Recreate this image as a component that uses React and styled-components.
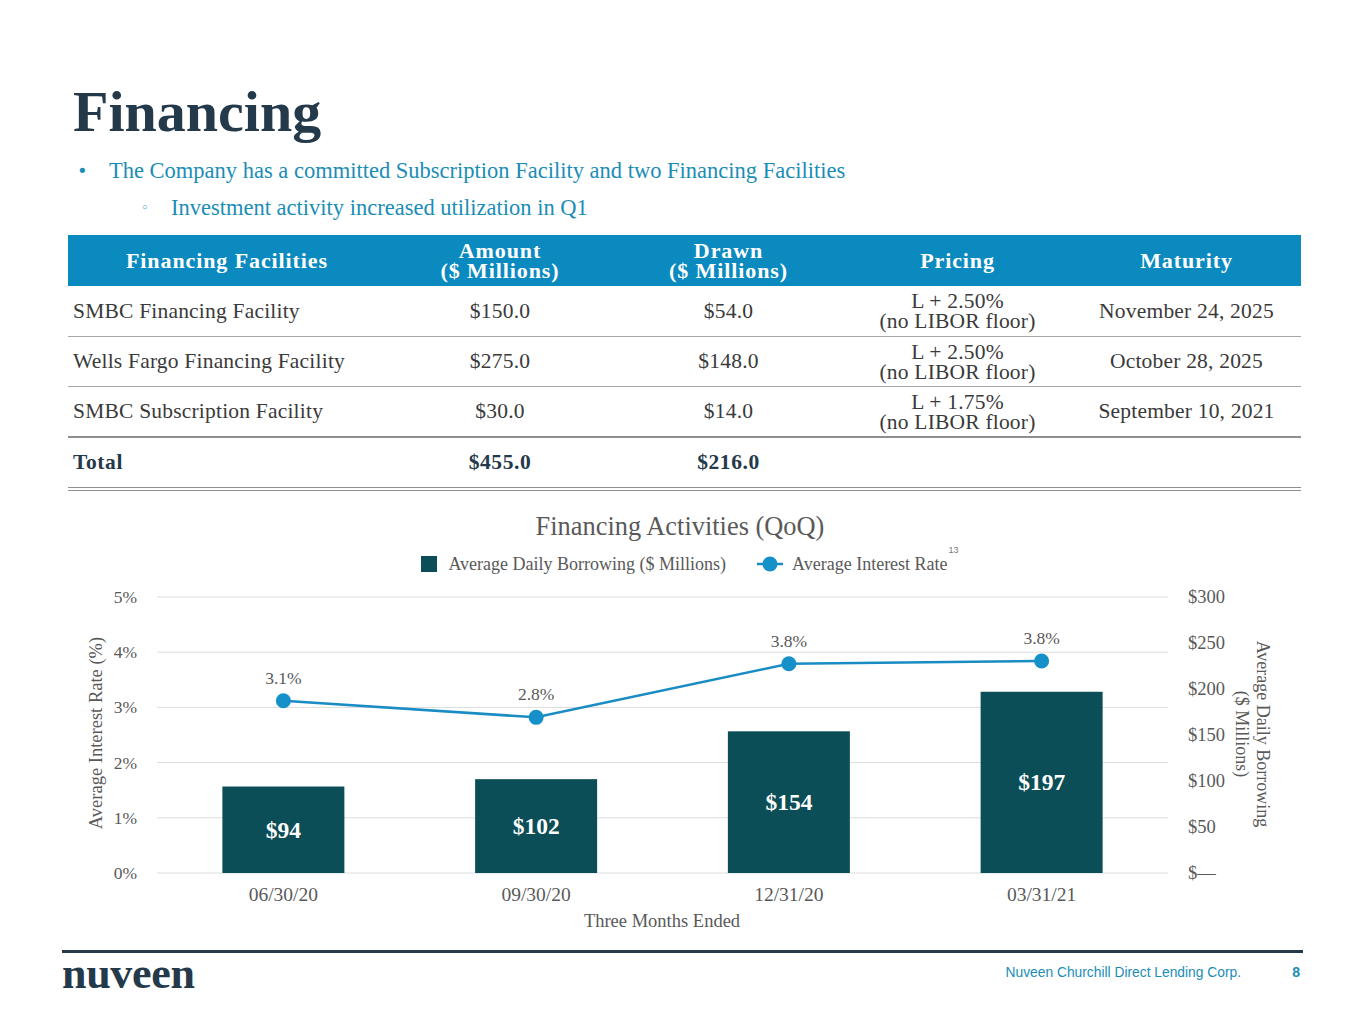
import React from "react";
import styled, { createGlobalStyle } from "styled-components";

const GlobalStyle = createGlobalStyle`
  html, body { margin: 0; padding: 0; background: #ffffff; }
  body { font-family: "Liberation Serif", "Times New Roman", serif; }
`;

const SERIF = `"Liberation Serif", "Times New Roman", serif`;
const NAVY = "#24394a";
const TEAL = "#1a8db6";
const HEAD_BLUE = "#0b8ac0";
const BAR = "#0b4e57";
const LINE = "#1a8cc4";
const GRAY_TEXT = "#595959";
const BODY_TEXT = "#3a3a3a";

const Page = styled.div`
  width: 1365px;
  height: 1024px;
  display: flex;
  flex-direction: column;
  overflow: hidden;
`;

const Title = styled.h1`
  margin: 82px 0 0 73px;
  height: 59px;
  font-family: ${SERIF};
  font-weight: 700;
  font-size: 58px;
  line-height: 60px;
  color: ${NAVY};
`;

const BulletList = styled.ul`
  list-style: none;
  margin: 18px 0 0 0;
  padding: 0;
  display: flex;
  flex-direction: column;
  gap: 13px;
`;

const BulletItem = styled.li`
  display: flex;
  align-items: center;
  height: 24px;
  padding-left: ${(p) => (p.$level === 2 ? 141 : 77)}px;
  font-family: ${SERIF};
  font-size: 22.5px;
  line-height: 24px;
  color: ${TEAL};
`;

const BulletMark = styled.span`
  display: inline-block;
  width: ${(p) => (p.$level === 2 ? 30 : 32)}px;
  font-size: ${(p) => (p.$level === 2 ? 13 : 18)}px;
  font-family: "DejaVu Sans", sans-serif;
`;

const Table = styled.div`
  margin: 15px 0 0 68px;
  width: 1233px;
  display: flex;
  flex-direction: column;
`;

const Row = styled.div`
  display: grid;
  grid-template-columns: 318px 228px 229px 229px 229px;
  box-sizing: border-box;
  height: ${(p) => p.$h}px;
  background: ${(p) => (p.$head ? HEAD_BLUE : "transparent")};
  border-bottom: ${(p) =>
    p.$head ? "none" : p.$total ? "4px double #8f8f8f" : p.$strong ? "2px solid #8f8f8f" : "1px solid #a8a8a8"};
`;

const HeadCell = styled.div`
  display: flex;
  flex-direction: column;
  align-items: center;
  justify-content: center;
  font-family: ${SERIF};
  font-weight: 700;
  font-size: 22px;
  letter-spacing: 0.9px;
  line-height: 21px;
  color: #ffffff;
  text-align: center;
`;

const Line = styled.span`
  display: block;
  height: 20px;
  line-height: 20px;
`;

const Cell = styled.div`
  display: flex;
  flex-direction: column;
  justify-content: center;
  align-items: ${(p) => (p.$left ? "flex-start" : "center")};
  padding-left: ${(p) => (p.$left ? 5 : 0)}px;
  font-family: ${SERIF};
  font-weight: ${(p) => (p.$bold ? 700 : 400)};
  font-size: 21.5px;
  letter-spacing: ${(p) => (p.$bold ? 0.6 : 0.2)}px;
  line-height: 21px;
  color: ${(p) => (p.$bold ? NAVY : BODY_TEXT)};
  text-align: center;
  white-space: nowrap;
`;

const ChartTitle = styled.div`
  margin-top: 18px;
  height: 34px;
  line-height: 34px;
  text-align: center;
  font-family: ${SERIF};
  font-size: 26.4px;
  color: ${GRAY_TEXT};
  padding-right: 5px;
`;

const Legend = styled.div`
  margin-top: 9px;
  height: 24px;
  display: flex;
  justify-content: center;
  align-items: center;
  gap: 31px;
  padding-left: 4px;
  font-family: ${SERIF};
  font-size: 18px;
  color: ${GRAY_TEXT};
`;

const LegendItem = styled.div`
  display: flex;
  align-items: center;
  gap: ${(p) => p.$gap}px;
  position: relative;
`;

const Swatch = styled.span`
  width: 16px;
  height: 16px;
  background: ${BAR};
  display: inline-block;
`;

const LegendSup = styled.sup`
  position: absolute;
  right: -11px;
  top: -9px;
  font-size: 9px;
  font-family: "Liberation Sans", Arial, sans-serif;
  color: #777;
`;

const ChartSvg = styled.svg`
  display: block;
  width: 1365px;
  height: 364px;
`;

const FooterRule = styled.div`
  margin: 10px 0 0 62px;
  width: 1241px;
  height: 3px;
  background: ${NAVY};
`;

const FooterRow = styled.div`
  height: 42px;
  display: flex;
  align-items: center;
  padding: 0 0 0 62px;
  width: 1241px;
`;

const Logo = styled.div`
  font-family: ${SERIF};
  font-weight: 700;
  font-size: 44px;
  line-height: 42px;
  color: ${NAVY};
  letter-spacing: -0.3px;
`;

const FooterText = styled.div`
  margin-left: auto;
  margin-top: -4px;
  font-family: "Liberation Sans", Arial, sans-serif;
  font-size: 13.8px;
  color: ${TEAL};
`;

const PageNum = styled.div`
  width: 62px;
  margin-top: -4px;
  text-align: right;
  padding-right: 3px;
  box-sizing: border-box;
  font-family: "Liberation Sans", Arial, sans-serif;
  font-weight: 700;
  font-size: 14px;
  color: ${TEAL};
`;

const rows = [
  ["SMBC Financing Facility", "$150.0", "$54.0", ["L + 2.50%", "(no LIBOR floor)"], "November 24, 2025"],
  ["Wells Fargo Financing Facility", "$275.0", "$148.0", ["L + 2.50%", "(no LIBOR floor)"], "October 28, 2025"],
  ["SMBC Subscription Facility", "$30.0", "$14.0", ["L + 1.75%", "(no LIBOR floor)"], "September 10, 2021"],
];
const rowHeights = [51, 50, 51];

const X0 = 157;
const X1 = 1168;
const Y0 = 873;
const PCT = 55.2;
const DOLLAR = 0.92;
const catW = (X1 - X0) / 4;
const data = [
  { label: "06/30/20", bar: 94, rate: 3.12, rateLabel: "3.1%" },
  { label: "09/30/20", bar: 102, rate: 2.82, rateLabel: "2.8%" },
  { label: "12/31/20", bar: 154, rate: 3.79, rateLabel: "3.8%" },
  { label: "03/31/21", bar: 197, rate: 3.84, rateLabel: "3.8%" },
];

function Chart() {
  const ticks = [0, 1, 2, 3, 4, 5];
  const rightTicks = ["$—", "$50", "$100", "$150", "$200", "$250", "$300"];
  const pts = data.map((d, i) => ({
    x: X0 + (i + 0.5) * catW,
    y: Y0 - d.rate * PCT,
  }));
  return (
    <ChartSvg viewBox="0 576 1365 364" fontFamily={SERIF}>
      {ticks.map((t) => (
        <line key={t} x1={X0} x2={X1} y1={Y0 - t * PCT} y2={Y0 - t * PCT} stroke="#dcdcdc" strokeWidth="1" />
      ))}
      {ticks.map((t) => (
        <text key={"l" + t} x={137} y={Y0 - t * PCT} textAnchor="end" dominantBaseline="central" fontSize="17.5" fill={GRAY_TEXT}>
          {t}%
        </text>
      ))}
      {rightTicks.map((t, i) => (
        <text key={"r" + i} x={1188} y={Y0 - i * 50 * DOLLAR} dominantBaseline="central" fontSize="18.5" fill={GRAY_TEXT}>
          {t}
        </text>
      ))}
      <text
        transform="translate(96 733) rotate(-90)"
        textAnchor="middle"
        dominantBaseline="central"
        fontSize="18.5"
        fill={GRAY_TEXT}
      >
        Average Interest Rate (%)
      </text>
      <text transform="translate(1263 734) rotate(90)" textAnchor="middle" dominantBaseline="central" fontSize="18" fill={GRAY_TEXT}>
        Average Daily Borrowing
      </text>
      <text transform="translate(1242 734) rotate(90)" textAnchor="middle" dominantBaseline="central" fontSize="18" fill={GRAY_TEXT}>
        ($ Millions)
      </text>
      {data.map((d, i) => {
        const cx = X0 + (i + 0.5) * catW;
        const h = d.bar * DOLLAR;
        return (
          <g key={d.label}>
            <rect x={cx - 61} y={Y0 - h} width={122} height={h} fill={BAR} />
            <text x={cx} y={Y0 - h / 2} textAnchor="middle" dominantBaseline="central" fontSize="23.5" fontWeight="700" fill="#ffffff">
              ${d.bar}
            </text>
            <text x={cx} y={894} textAnchor="middle" dominantBaseline="central" fontSize="19.5" fill={GRAY_TEXT}>
              {d.label}
            </text>
          </g>
        );
      })}
      <polyline points={pts.map((p) => `${p.x},${p.y}`).join(" ")} fill="none" stroke={LINE} strokeWidth="2.5" />
      {pts.map((p, i) => (
        <g key={i}>
          <circle cx={p.x} cy={p.y} r="7.5" fill="#1590c9" />
          <text x={p.x} y={p.y - 23} textAnchor="middle" dominantBaseline="central" fontSize="17.5" fill={GRAY_TEXT}>
            {data[i].rateLabel}
          </text>
        </g>
      ))}
      <text x={662} y={921} textAnchor="middle" dominantBaseline="central" fontSize="18.5" fill={GRAY_TEXT}>
        Three Months Ended
      </text>
    </ChartSvg>
  );
}

export default function App() {
  return (
    <Page>
      <GlobalStyle />
      <Title>Financing</Title>
      <BulletList>
        <BulletItem $level={1}>
          <BulletMark $level={1}>•</BulletMark>
          The Company has a committed Subscription Facility and two Financing Facilities
        </BulletItem>
        <BulletItem $level={2}>
          <BulletMark $level={2}>◦</BulletMark>
          Investment activity increased utilization in Q1
        </BulletItem>
      </BulletList>
      <Table>
        <Row $head $h={51}>
          <HeadCell>Financing Facilities</HeadCell>
          <HeadCell>
            <Line>Amount</Line>
            <Line>($ Millions)</Line>
          </HeadCell>
          <HeadCell>
            <Line>Drawn</Line>
            <Line>($ Millions)</Line>
          </HeadCell>
          <HeadCell>Pricing</HeadCell>
          <HeadCell>Maturity</HeadCell>
        </Row>
        {rows.map((r, i) => (
          <Row key={r[0]} $h={rowHeights[i]} $strong={i === rows.length - 1}>
            <Cell $left>{r[0]}</Cell>
            <Cell>{r[1]}</Cell>
            <Cell>{r[2]}</Cell>
            <Cell>
              <Line>{r[3][0]}</Line>
              <Line>{r[3][1]}</Line>
            </Cell>
            <Cell>{r[4]}</Cell>
          </Row>
        ))}
        <Row $total $h={53}>
          <Cell $left $bold>Total</Cell>
          <Cell $bold>$455.0</Cell>
          <Cell $bold>$216.0</Cell>
          <Cell />
          <Cell />
        </Row>
      </Table>
      <ChartTitle>Financing Activities (QoQ)</ChartTitle>
      <Legend>
        <LegendItem $gap={11}>
          <Swatch />
          Average Daily Borrowing ($ Millions)
        </LegendItem>
        <LegendItem $gap={9}>
          <svg width="26" height="18" viewBox="0 0 26 18">
            <line x1="0" y1="9" x2="26" y2="9" stroke={LINE} strokeWidth="2.5" />
            <circle cx="13" cy="9" r="7.5" fill="#1590c9" />
          </svg>
          Average Interest Rate
          <LegendSup>13</LegendSup>
        </LegendItem>
      </Legend>
      <Chart />
      <FooterRule />
      <FooterRow>
        <Logo>nuveen</Logo>
        <FooterText>Nuveen Churchill Direct Lending Corp.</FooterText>
        <PageNum>8</PageNum>
      </FooterRow>
    </Page>
  );
}
